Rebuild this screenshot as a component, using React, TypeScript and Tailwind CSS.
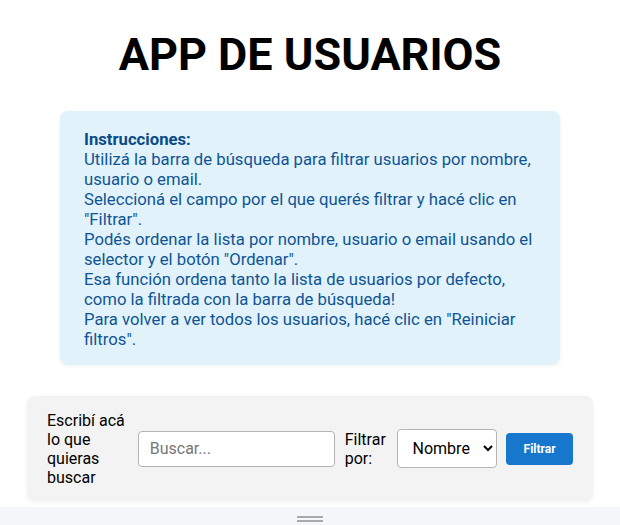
export default function App() {
  return (
    <div className="min-h-[525px] bg-white font-['Roboto',_'Liberation_Sans',_sans-serif] flex flex-col">
      <h1 className="pt-[29px] text-center text-[45px] font-bold leading-[52px] text-black">APP DE USUARIOS</h1>

      <div className="mx-auto mt-[30px] w-[500px] rounded-lg bg-[#e2f2fb] px-6 pt-[19px] pb-[15px] text-[16.7px] leading-5 text-[#0f5595] shadow-[0_1px_4px_rgba(0,0,0,0.06)]">
        <p className="font-bold text-[#0b4a88]">Instrucciones:</p>
        <p>Utilizá la barra de búsqueda para filtrar usuarios por nombre, usuario o email.</p>
        <p>Seleccioná el campo por el que querés filtrar y hacé clic en "Filtrar".</p>
        <p>Podés ordenar la lista por nombre, usuario o email usando el selector y el botón "Ordenar".</p>
        <p>Esa función ordena tanto la lista de usuarios por defecto, como la filtrada con la barra de búsqueda!</p>
        <p>Para volver a ver todos los usuarios, hacé clic en "Reiniciar filtros".</p>
      </div>

      <div className="mx-auto mt-[31px] flex h-[105px] w-[566px] items-center gap-[10px] rounded-lg bg-[#f3f3f3] px-5 shadow-[0_1px_4px_rgba(0,0,0,0.06)]">
        <label className="w-[81px] text-[16px] leading-[19px] text-black">Escribí acá lo que quieras buscar</label>
        <input
          placeholder="Buscar..."
          className="h-[36px] w-[197px] rounded border border-[#b5b5b5] bg-white px-[11px] text-[16px] text-black outline-none placeholder:text-[#777]"
        />
        <label className="w-[42px] text-[16px] leading-[19px] text-black">Filtrar por:</label>
        <select className="h-[39px] w-[101px] rounded border border-[#b5b5b5] bg-white pl-[11px] text-[16px] text-black">
          <option>Nombre</option>
          <option>Usuario</option>
          <option>Email</option>
        </select>
        <button className="ml-[-1px] mt-[1px] h-[32px] w-[67px] rounded bg-[#1677cc] text-[12px] font-bold text-white">Filtrar</button>
      </div>

      <div className="mt-[6px] flex flex-1 justify-center bg-[#f4f8fb] pt-[9px]">
        <div className="flex flex-col gap-[2px]">
          <span className="block h-[2px] w-[26px] bg-[#aaaaaa]" />
          <span className="block h-[2px] w-[26px] bg-[#aaaaaa]" />
        </div>
      </div>
    </div>
  );
}
